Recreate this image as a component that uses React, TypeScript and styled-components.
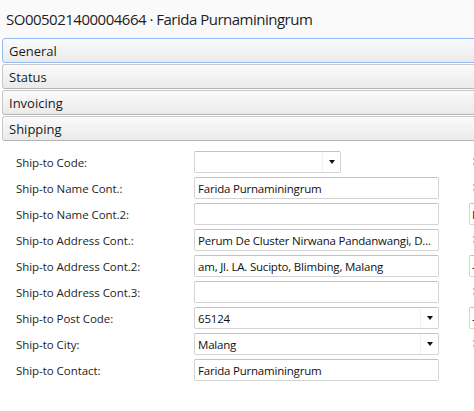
import React from "react";
import styled, { createGlobalStyle } from "styled-components";

const fontStack = `"Open Sans", "Noto Sans", "Liberation Sans", sans-serif`;

const GlobalStyle = createGlobalStyle`
  html, body {
    margin: 0;
    padding: 0;
    background: #ffffff;
    overflow: hidden;
  }
  body {
    font-family: ${fontStack};
    color: #1e1e1e;
  }
`;

const Page = styled.div`
  width: 474px;
  height: 411px;
  overflow: hidden;
  background: #ffffff;
`;

const TitleBar = styled.div`
  height: 38px;
  display: flex;
  align-items: center;
  padding-left: 6px;
  background: #fafafa;
  font-size: 15px;
  letter-spacing: -0.5px;
  color: #1e1e1e;
  white-space: nowrap;
`;

const Tabs = styled.div`
  display: flex;
  flex-direction: column;
  gap: 1px;
  padding-left: 2px;
  background: #ffffff;
`;

const TabHeader = styled.div<{ $focused?: boolean }>`
  box-sizing: border-box;
  height: 25px;
  width: 480px;
  display: flex;
  align-items: center;
  padding-left: 6px;
  font-size: 13px;
  color: #1a1a1a;
  background: linear-gradient(#fbfbfb, #eaeaea);
  border: 1px solid ${(p) => (p.$focused ? "#92b9f2" : "#c9c9c9")};
  border-bottom-color: ${(p) => (p.$focused ? "#92b9f2" : "#b4b4b4")};
  border-radius: 3px 0 0 3px;
`;

const Form = styled.div`
  display: grid;
  grid-template-columns: 178px 245px 30px 40px;
  grid-auto-rows: 22px;
  row-gap: 4px;
  padding: 10px 0 0 16px;
`;

const Label = styled.div`
  display: flex;
  align-items: center;
  font-size: 11.5px;
  letter-spacing: -0.05px;
  color: #1e1e1e;
  white-space: nowrap;
`;

const Field = styled.div<{ $width?: number; $combo?: boolean }>`
  box-sizing: border-box;
  width: ${(p) => (p.$width ? `${p.$width}px` : "100%")};
  height: 22px;
  display: flex;
  align-items: center;
  padding-left: 3px;
  padding-right: ${(p) => (p.$combo ? "0" : "2px")};
  background: #ffffff;
  border: 1px solid #d3d3d3;
  border-top-color: #c2c2c2;
  border-radius: 2px;
  font-size: 11.5px;
  letter-spacing: -0.2px;
  color: #111111;
  white-space: nowrap;
  overflow: hidden;
`;

const FieldText = styled.span`
  flex: 1;
  overflow: hidden;
  white-space: nowrap;
`;

const DropButton = styled.div`
  width: 18px;
  height: 100%;
  display: flex;
  align-items: center;
  justify-content: center;
  border-left: 1px solid #f1f1f1;
  box-sizing: border-box;
`;

const Arrow = styled.span`
  width: 0;
  height: 0;
  border-left: 3.5px solid transparent;
  border-right: 3.5px solid transparent;
  border-top: 4px solid #111111;
  margin-left: 1px;
`;

const SideCell = styled.div`
  grid-column: 4;
  display: flex;
  align-items: center;
  overflow: hidden;
`;

const Marker = styled.span`
  margin-left: 4px;
  width: 1px;
  height: 8px;
  background: repeating-linear-gradient(
    #f3b451 0,
    #f3b451 2px,
    transparent 2px,
    transparent 5px
  );
`;

const SideBox = styled.div`
  box-sizing: border-box;
  flex: none;
  width: 60px;
  height: 22px;
  padding-left: 2px;
  display: flex;
  align-items: center;
  background: #ffffff;
  border: 1px solid #d3d3d3;
  border-top-color: #c2c2c2;
  border-radius: 2px;
  font-size: 11.5px;
  color: #111111;
  white-space: nowrap;
  overflow: hidden;
`;

type Row = {
  label: string;
  value: string;
  combo?: boolean;
  width?: number;
  side: "marker" | "box" | "none";
  sideText?: string;
};

const rows: Row[] = [
  { label: "Ship-to Code:", value: "", combo: true, width: 147, side: "marker" },
  { label: "Ship-to Name Cont.:", value: "Farida Purnaminingrum", side: "marker" },
  { label: "Ship-to Name Cont.2:", value: "", side: "box", sideText: "ID" },
  {
    label: "Ship-to Address Cont.:",
    value: "Perum De Cluster Nirwana Pandanwangi, D...",
    side: "marker",
  },
  {
    label: "Ship-to Address Cont.2:",
    value: "am, Jl. LA. Sucipto, Blimbing, Malang",
    side: "box",
    sideText: "-",
  },
  { label: "Ship-to Address Cont.3:", value: "", side: "marker" },
  { label: "Ship-to Post Code:", value: "65124", combo: true, side: "box", sideText: "-" },
  { label: "Ship-to City:", value: "Malang", combo: true, side: "marker" },
  { label: "Ship-to Contact:", value: "Farida Purnaminingrum", side: "none" },
];

const App: React.FunctionComponent = () => {
  return (
    <Page>
      <GlobalStyle />
      <TitleBar>SO005021400004664 · Farida Purnaminingrum</TitleBar>
      <Tabs>
        <TabHeader $focused>General</TabHeader>
        <TabHeader>Status</TabHeader>
        <TabHeader>Invoicing</TabHeader>
        <TabHeader>Shipping</TabHeader>
      </Tabs>
      <Form>
        {rows.map((r) => (
          <React.Fragment key={r.label}>
            <Label>{r.label}</Label>
            <Field $width={r.width} $combo={r.combo}>
              <FieldText>{r.value}</FieldText>
              {r.combo && (
                <DropButton>
                  <Arrow />
                </DropButton>
              )}
            </Field>
            <SideCell>
              {r.side === "marker" && <Marker />}
              {r.side === "box" && <SideBox>{r.sideText}</SideBox>}
            </SideCell>
          </React.Fragment>
        ))}
      </Form>
    </Page>
  );
};

export default App;
